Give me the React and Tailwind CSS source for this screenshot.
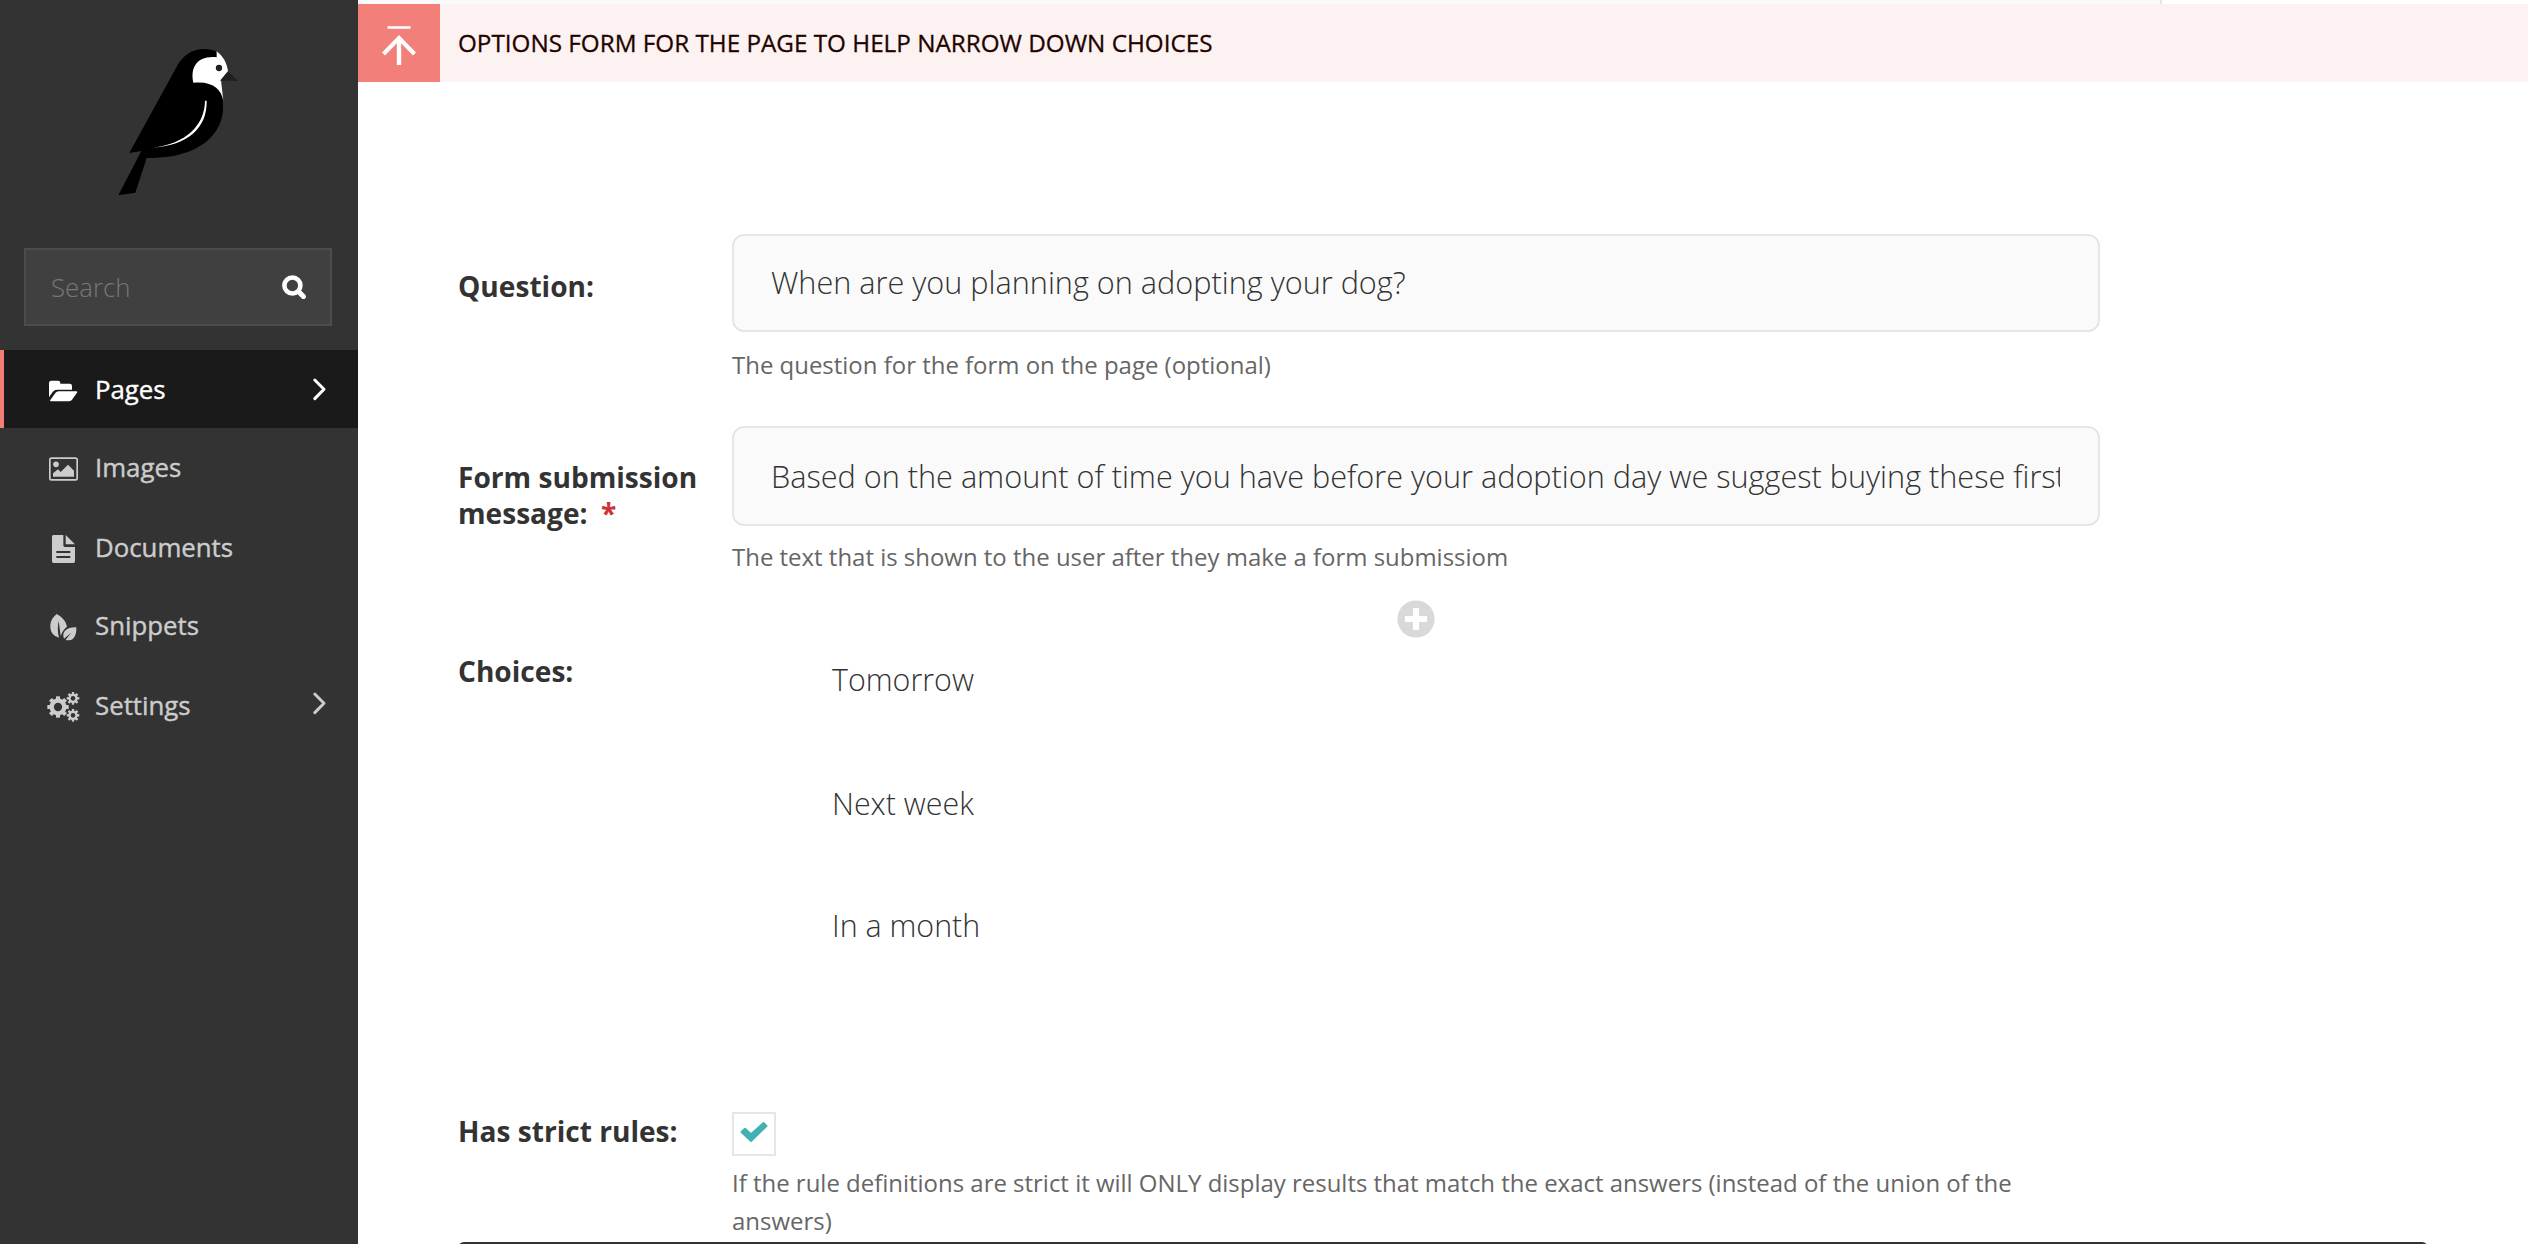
const Bird = () => (
  <svg viewBox="0 0 540 540" className="ml-[90px] size-[180px] shrink-0">
    <path d="M118 369L258 114C276 78 304 57 344 57C358 57 370 60 380 65L388 160C396 178 400 200 399 238C397 288 366 333 314 357C270 378 224 384 170 384L136 488L85 496L154 363Z" fill="#000" />
    <path d="M380 64C399 79 411 98 414 124L393 150L400 212C394 178 368 152 310 158C300 112 322 76 380 82Z" fill="#fff" />
    <path d="M414 124L444 153L390 152Z" fill="#231f20" />
    <circle cx="387" cy="114" r="9.5" fill="#231f20" />
    <path d="M345 212L350 212C352 295 292 345 190 353C286 340 344 288 345 212Z" fill="#fff" />
  </svg>
);

const FolderIcon = () => (
  <svg viewBox="135 423 108 108" className="size-9" fill="currentColor">
    <path d="M147 502V459Q147 452 154 452H174Q181 452 181 459V461H209Q216 461 216 468V479H172Q163 479 158 486Z" />
    <path d="M152 514Q149 514 151 510L166 489Q170 484 176 484H229Q233 484 231 488L216 509Q212 514 206 514Z" />
  </svg>
);

const ImageIcon = () => (
  <svg viewBox="135 87 108 108" className="size-9" fill="currentColor">
    <rect x="149.5" y="114.5" width="82" height="65" rx="5" fill="none" stroke="currentColor" strokeWidth="5" />
    <circle cx="168" cy="133" r="8.5" />
    <path d="M159 170V160L174 148L182 156L204 134L222 152V170Z" />
  </svg>
);

const DocumentIcon = () => (
  <svg viewBox="135 327 108 108" className="size-9" fill="currentColor">
    <path fillRule="evenodd" d="M160 345H190V376Q190 381 195 381H225V424Q225 429 220 429H160Q156 429 156 424V350Q156 345 160 345ZM169 393V399H211V393ZM169 408V414H211V408Z" />
    <path d="M197 345L225 373H197Z" />
  </svg>
);

const LeafIcon = () => (
  <svg viewBox="135 561 108 108" className="size-9" fill="currentColor">
    <path d="M170 582C187 591 198 604 201 620C191 627 186 637 182 648L176 603C172 620 173 638 177 653C159 648 151 636 151 619C151 602 159 591 170 582Z" />
    <path d="M229 622C230 647 221 661 207 661C203 661 199 660 197 659L214 638L192 656C184 636 199 621 229 622Z" />
  </svg>
);

const Gear = ({ cx, cy, r, width, tooth, toothWidth }) => (
  <g stroke="currentColor" fill="none">
    <circle cx={cx} cy={cy} r={r} strokeWidth={width} />
    {[0, 45, 90, 135, 180, 225, 270, 315].map((angle) => (
      <path key={angle} d={`M${cx + r} ${cy}H${cx + tooth}`} strokeWidth={toothWidth} transform={`rotate(${angle} ${cx} ${cy})`} />
    ))}
  </g>
);

const CogsIcon = () => (
  <svg viewBox="135 801 108 108" className="size-9">
    <Gear cx={174} cy={861} r={19} width={13} tooth={32} toothWidth={12} />
    <Gear cx={219} cy={835} r={10.5} width={7} tooth={19} toothWidth={7} />
    <Gear cx={219} cy={886} r={10.5} width={7} tooth={19} toothWidth={7} />
  </svg>
);

const Chevron = ({ className }) => (
  <svg viewBox="0 0 20 36" className={"ml-auto mr-7 h-9 w-5 shrink-0 " + className} fill="none" stroke="currentColor" strokeWidth="3" strokeLinecap="round" strokeLinejoin="round">
    <path d="M4.8 9L14 18.3L4.8 27.6" />
  </svg>
);

const menu = [
  { label: "Images", Icon: ImageIcon, spacing: "" },
  { label: "Documents", Icon: DocumentIcon, spacing: "mt-0.5" },
  { label: "Snippets", Icon: LeafIcon, spacing: "" },
  { label: "Settings", Icon: CogsIcon, spacing: "mt-0.5", more: true },
];

const Sidebar = () => (
  <aside className="flex w-[358px] shrink-0 flex-col bg-[#333333] pt-[30px] text-[25.8px] text-[#cccccc]">
    <Bird />
    <div className="mx-6 mt-[38px] mr-[26px] flex h-[78px] shrink-0 items-center border-2 border-[#4c4c4c] bg-[#404040] pr-6 pl-[25px]">
      <span className="font-light text-[#777777]">Search</span>
      <svg viewBox="0 0 24 24" className="ml-auto size-6" fill="none" stroke="#fff">
        <circle cx="10.4" cy="10.5" r="8" strokeWidth="4.6" />
        <path d="M17 17L21.4 21.6" strokeWidth="5" strokeLinecap="round" />
      </svg>
    </div>
    <nav className="mt-6 flex flex-col">
      <a className="flex h-[78px] items-center border-l-4 border-[#f37e77] bg-[#1a1a1a] pl-[41px] text-white [text-shadow:-1px_-1px_0_rgba(0,0,0,0.3)]">
        <FolderIcon />
        <span className="ml-[14px] [-webkit-text-stroke:0.4px_currentColor]">Pages</span>
        <Chevron className="" />
      </a>
      {menu.map(({ label, Icon, spacing, more }) => (
        <a key={label} className={"flex h-[78px] items-center pl-[45px] " + spacing}>
          <Icon />
          <span className="ml-[14px] [-webkit-text-stroke:0.4px_currentColor]">{label}</span>
          {more && <Chevron className="-mt-1" />}
        </a>
      ))}
    </nav>
  </aside>
);

const Label = ({ className, children }) => (
  <div className={"w-[274px] shrink-0 text-[28.1px] leading-9 font-bold whitespace-nowrap " + className}>{children}</div>
);

const Help = ({ className, children }) => (
  <p className={"text-[23.96px] leading-[38px] whitespace-nowrap text-[#666666] " + className}>{children}</p>
);

const Field = ({ className, children }) => (
  <div className={"flex w-[1368px] items-center rounded-xl border-2 border-[#e6e6e6] bg-[#fafafa] pr-[38px] pl-[37px] text-[30.65px] font-light " + className}>
    <span className="w-full overflow-hidden leading-[44px] whitespace-nowrap">{children}</span>
  </div>
);

export default function App() {
  return (
    <div className="flex h-[1244px] w-[2528px] overflow-hidden bg-white font-['Open_Sans',sans-serif] text-[#333333]">
      <Sidebar />
      <main className="flex min-w-0 flex-1 flex-col">
        <div className="h-1 w-[1804px] shrink-0 border-r-2 border-[#e6e6e6] bg-[#fafafa]" />
        <header className="flex h-[78px] shrink-0 items-center bg-[#fcf2f1]">
          <div className="flex h-full w-[82px] items-center justify-center bg-[#f27f79]">
            <svg viewBox="0 0 36 40" className="mt-1 h-10 w-9" fill="none" stroke="#fff">
              <path d="M6.5 2.5H29.5" strokeWidth="2.6" />
              <path d="M18 40V14" strokeWidth="4.4" />
              <path d="M2.5 29L18 13L33.5 29" strokeWidth="4.2" />
            </svg>
          </div>
          <h2 className="ml-[18px] text-[24.25px] whitespace-nowrap text-[#1f0300] [-webkit-text-stroke:0.3px_currentColor]">OPTIONS FORM FOR THE PAGE TO HELP NARROW DOWN CHOICES</h2>
        </header>

        <div className="flex flex-col pt-[152px] pl-[100px]">
          <div className="flex">
            <Label className="mt-[34px]">Question:</Label>
            <div>
              <Field className="h-[98px] pb-0.5">When are you planning on adopting your dog?</Field>
              <Help className="mt-[14px]">The question for the form on the page (optional)</Help>
            </div>
          </div>

          <div className="mt-[42px] flex">
            <Label className="mt-[33px]">
              Form submission
              <br />
              message: <span className="ml-1.5 text-[#cd3238]">*</span>
            </Label>
            <div>
              <Field className="h-[100px]">Based on the amount of time you have before your adoption day we suggest buying these first</Field>
              <Help className="mt-3">The text that is shown to the user after they make a form submissiom</Help>
            </div>
          </div>

          <div className="mt-6 ml-[274px] flex w-[1368px] justify-center">
            <svg viewBox="0 0 38 38" className="size-[38px]">
              <circle cx="19" cy="19" r="18.6" fill="#d9d9d9" />
              <path d="M19 11V27M11 19H27" stroke="#fff" strokeWidth="6.2" strokeLinecap="square" />
            </svg>
          </div>

          <div className="flex">
            <Label className="mt-[15px]">Choices:</Label>
            <ul className="pt-[21px] pl-[100px] text-[30.4px] leading-[42px] font-light">
              <li>Tomorrow</li>
              <li className="mt-[82px]">Next week</li>
              <li className="mt-20">In a month</li>
            </ul>
          </div>

          <div className="mt-[165px] flex">
            <Label className="mt-px">Has strict rules:</Label>
            <div>
              <div className="flex size-11 items-center justify-center border-2 border-[#e6e6e6] bg-white">
                <svg viewBox="0 0 28 22" className="-mt-1 h-[22px] w-7" fill="#43b1b0" stroke="#43b1b0" strokeWidth="2" strokeLinejoin="round">
                  <path d="M1.5 11L5 7.7L11 13.2L23.5 2L26.5 5L11 20Z" />
                </svg>
              </div>
              <Help className="mt-2">
                If the rule definitions are strict it will ONLY display results that match the exact answers (instead of the union of the
                <br />
                answers)
              </Help>
            </div>
          </div>
          <div className="mt-0.5 h-10 w-[1970px] rounded-md bg-[#333333]" />
        </div>
      </main>
    </div>
  );
}
